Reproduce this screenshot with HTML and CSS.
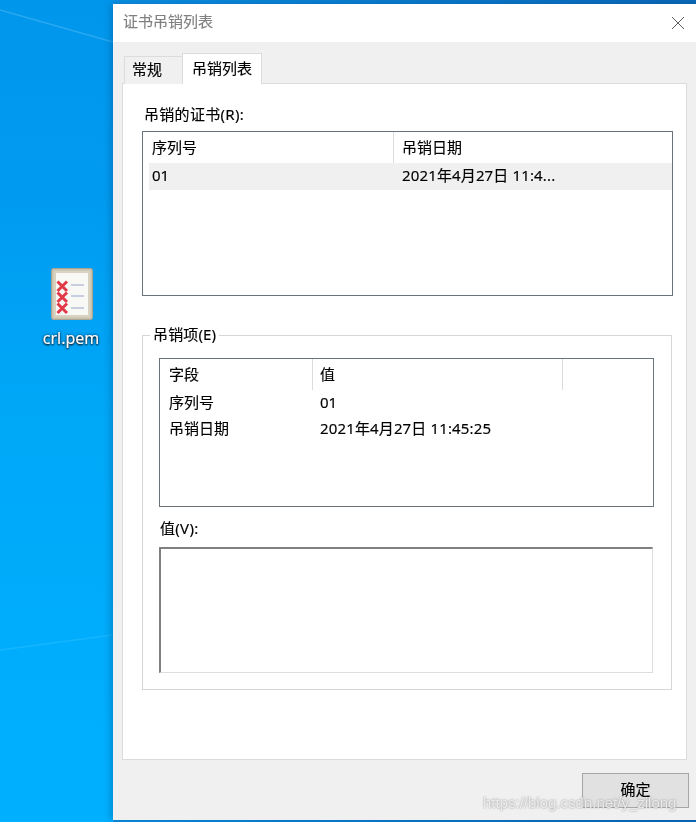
FILE: index.html
```html
<!DOCTYPE html>
<html lang="zh-CN">
<head>
<meta charset="utf-8">
<title>证书吊销列表</title>
<link rel="stylesheet" href="styles.css">
</head>
<body>
<main class="desktop">
  <svg class="streaks" width="113" height="822" viewBox="0 0 113 822" aria-hidden="true">
    <path d="M0 10 L113 42" stroke="#46b4f4" stroke-width="1.5" opacity=".6"/>
    <path d="M0 650 L113 635" stroke="#30c0ff" stroke-width="1.5" opacity=".45"/>
  </svg>
  <div class="desk-icon">
    <svg class="desk-glyph" width="42" height="52" viewBox="0 0 42 52" aria-hidden="true">
      <rect x="0.5" y="0.5" width="41" height="51" rx="2" fill="#c9c1ac" stroke="#a9a594"/>
      <rect x="2.5" y="2.5" width="37" height="47" fill="#d8d2c2"/>
      <rect x="5" y="5" width="32" height="42" fill="#f8f8f5"/>
      <g stroke="#e03a48" stroke-width="3">
        <path d="M6.5 13.5 L16 23 M16 13.5 L6.5 23"/>
        <path d="M6.5 24.5 L16 34 M16 24.5 L6.5 34"/>
        <path d="M6.5 35.5 L16 45 M16 35.5 L6.5 45"/>
      </g>
      <g stroke="#c8cde2" stroke-width="2">
        <path d="M20 17 H33 M20 28 H33 M20 40 H33"/>
      </g>
    </svg>
    <span class="desk-label">crl.pem</span>
  </div>

  <section class="window">
    <header class="titlebar">
      <span class="title">证书吊销列表</span>
      <svg class="close" width="14" height="14" viewBox="0 0 14 14" aria-hidden="true">
        <path d="M1 1 L13 13 M13 1 L1 13" stroke="#5a5a5a" stroke-width="1"/>
      </svg>
    </header>
    <div class="client">
      <div class="tabs">
        <span class="tab">常规</span>
        <span class="tab tab-active">吊销列表</span>
      </div>
      <div class="panel">
        <div class="field-label">吊销的证书(R):</div>
        <div class="list list-certs">
          <div class="cols cols-certs list-head">
            <span class="cell">序列号</span>
            <span class="cell cell-div">吊销日期</span>
          </div>
          <div class="cols cols-certs row-selected">
            <span class="cell">01</span>
            <span class="cell cell-date">2021年4月27日 11:4...</span>
          </div>
        </div>
        <fieldset class="group">
          <legend class="legend">吊销项(E)</legend>
          <div class="list list-fields">
            <div class="cols cols-fields list-head">
              <span class="cell">字段</span>
              <span class="cell cell-div cell-value-head">值</span>
              <span class="cell cell-div"></span>
            </div>
            <div class="cols cols-fields row">
              <span class="cell">序列号</span>
              <span class="cell">01</span>
            </div>
            <div class="cols cols-fields row">
              <span class="cell">吊销日期</span>
              <span class="cell cell-date">2021年4月27日 11:45:25</span>
            </div>
          </div>
          <div class="field-label value-label">值(V):</div>
          <div class="value-box"></div>
        </fieldset>
      </div>
      <div class="footer">
        <button class="ok" type="button">确定</button>
      </div>
    </div>
  </section>
  <span class="watermark">https://blog.csdn.net/y_zilong</span>
</main>
</body>
</html>
```
FILE: styles.css
```css
* { box-sizing: border-box; }
html, body { margin: 0; padding: 0; height: 100%; overflow: hidden; }
body {
  font-family: "Noto Sans", "Noto Sans CJK SC", sans-serif;
  font-size: 15px;
  color: #000;
  -webkit-text-stroke: .15px currentColor;
}
.desktop {
  position: relative;
  width: 696px;
  height: 822px;
  overflow: hidden;
  filter: blur(0.4px);
  background: linear-gradient(180deg, #0096ec 0, #009af0 180px, #00a8f8 420px, #00b0ff 822px);
}
.desktop::before {
  content: "";
  position: absolute;
  left: 113px;
  right: 0;
  top: 0;
  height: 822px;
  background: linear-gradient(90deg, #0a90e4, #0a68ba);
}
.streaks { position: absolute; left: 0; top: 0; }
.desk-icon {
  position: absolute;
  left: 36px;
  top: 268px;
  width: 70px;
  display: flex;
  flex-direction: column;
  align-items: center;
  gap: 8px;
}
.desk-glyph { margin-left: 2px; }
.desk-label {
  color: #fff;
  font-size: 16px;
  line-height: 20px;
  text-shadow: 0 1px 2px #000, 0 0 3px #00345c;
}
.window {
  position: absolute;
  left: 113px;
  top: 4px;
  width: 590px;
  height: 816px;
  background: #f0f0f0;
  box-shadow: -2px 0 7px rgba(0, 60, 110, .35);
  display: flex;
  flex-direction: column;
}
.titlebar {
  height: 38px;
  background: #fff;
  display: flex;
  align-items: center;
  justify-content: space-between;
  padding: 0 19px 0 10px;
  flex: none;
}
.title { color: #808080; font-size: 15px; line-height: 20px; margin-top: -5px; }
.close { margin-right: -1px; }
.client { flex: 1; padding: 11px 0 0 9px; display: flex; flex-direction: column; }
.tabs {
  display: flex;
  align-items: flex-end;
  height: 31px;
  margin-bottom: -1px;
  padding-left: 2px;
  position: relative;
  z-index: 1;
}
.tab {
  height: 28px;
  width: 58px;
  border: 1px solid #dcdcdc;
  border-bottom: 0;
  border-right: 0;
  background: #f0f0f0;
  padding-left: 7px;
  line-height: 25px;
}
.tab-active {
  height: 31px;
  width: 80px;
  background: #fff;
  border-right: 1px solid #dcdcdc;
  padding-left: 9px;
  line-height: 28px;
}
.panel {
  width: 565px;
  height: 677px;
  background: #fff;
  border: 1px solid #dcdcdc;
  padding: 21px 0 0 19px;
}
.field-label { line-height: 18px; height: 26px; padding-left: 2px; letter-spacing: .3px; }
.list { border: 1px solid #6a727a; background: #fff; }
.list-certs { width: 531px; height: 165px; padding: 0 0 0 6px; }
.list-fields { width: 495px; height: 149px; }
.cols { display: grid; align-items: center; }
.cols-certs { grid-template-columns: 244px 176px; }
.cols-fields { grid-template-columns: 152px 250px 91px; }
.list-head { height: 31px; }
.cell { height: 100%; padding-left: 3px; line-height: 30px; white-space: nowrap; }
.cell-div { border-left: 1px solid #dcdcdc; padding-left: 8px; }
.cell-value-head { padding-left: 7px; }
.cell-date { letter-spacing: .14px; }
.row-selected { background: #f0f0f0; height: 27px; }
.row-selected .cell { line-height: 24px; }
.row-selected .cell + .cell { padding-left: 9px; }
.row { height: 26px; }
.row .cell { line-height: 24px; }
.row .cell + .cell { padding-left: 8px; }
.list-fields .cell:first-child { padding-left: 9px; }
.group {
  margin: 29px 0 0;
  width: 530px;
  height: 365px;
  border: 1px solid #d6d6d6;
  padding: 13px 0 0 16px;
  min-width: 0;
}
.legend { padding: 0 3px; margin-left: -9px; line-height: 18px; height: 20px; letter-spacing: .15px; }
.value-label { margin-top: 12px; padding-left: 1px; height: 28px; }
.value-box {
  width: 494px;
  height: 126px;
  background: #fff;
  border-style: solid;
  border-width: 2px 1px 1px 2px;
  border-color: #808080 #dedede #dedede #808080;
}
.footer { padding: 13px 0 0 460px; }
.ok {
  width: 107px;
  height: 35px;
  background: #e1e1e1;
  border: 1px solid #a6a6a6;
  border-radius: 0;
  font: inherit;
  line-height: 28px;
  color: #000;
  padding: 0 0 3px;
}
.watermark {
  position: absolute;
  left: 483px;
  top: 793px;
  font-family: "Liberation Sans", sans-serif;
  font-size: 15px;
  line-height: 20px;
  color: rgba(255, 255, 255, .75);
  text-shadow: 0 0 2px rgba(120, 120, 120, .9);
  -webkit-text-stroke: 0;
  white-space: nowrap;
}
```
